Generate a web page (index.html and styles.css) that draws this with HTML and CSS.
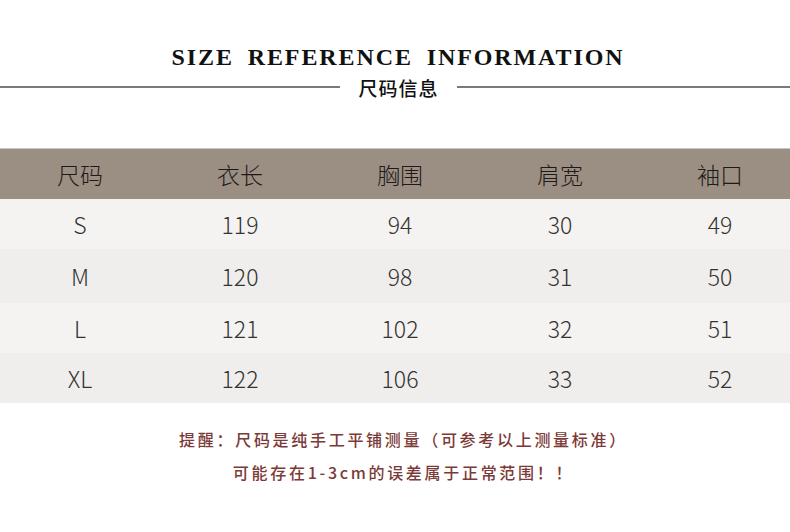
FILE: index.html
```html
<!DOCTYPE html>
<html lang="zh">
<head>
<meta charset="utf-8">
<link rel="stylesheet" href="styles.css">
</head>
<body>
<div class="page">
  <h1 class="title">SIZE REFERENCE INFORMATION</h1>
  <div class="subtitle">
    <span class="rule rule-left"></span>
    <span class="sub-text">尺码信息</span>
    <span class="rule rule-right"></span>
  </div>
  <div class="table">
    <div class="row head">
      <div class="cell">尺码</div><div class="cell">衣长</div><div class="cell">胸围</div><div class="cell">肩宽</div><div class="cell">袖口</div>
    </div>
    <div class="row light">
      <div class="cell">S</div><div class="cell">119</div><div class="cell">94</div><div class="cell">30</div><div class="cell">49</div>
    </div>
    <div class="row dark tall">
      <div class="cell">M</div><div class="cell">120</div><div class="cell">98</div><div class="cell">31</div><div class="cell">50</div>
    </div>
    <div class="row light">
      <div class="cell">L</div><div class="cell">121</div><div class="cell">102</div><div class="cell">32</div><div class="cell">51</div>
    </div>
    <div class="row dark">
      <div class="cell">XL</div><div class="cell">122</div><div class="cell">106</div><div class="cell">33</div><div class="cell">52</div>
    </div>
  </div>
  <div class="note">
    <p>提醒：尺码是纯手工平铺测量（可参考以上测量标准）</p>
    <p>可能存在1-3cm的误差属于正常范围！！</p>
  </div>
</div>
</body>
</html>
```
FILE: styles.css
```css
html, body {
  margin: 0;
  padding: 0;
  background: #ffffff;
}
.page {
  width: 790px;
  height: 532px;
  overflow: hidden;
}
.title {
  margin: 0;
  padding-top: 42px;
  padding-left: 6px;
  font-family: "Liberation Serif", serif;
  font-weight: bold;
  font-size: 24px;
  line-height: 30px;
  letter-spacing: 1.9px;
  word-spacing: 6px;
  text-align: center;
  color: #111;
}
.subtitle {
  display: flex;
  align-items: center;
  margin-top: 0;
  height: 30px;
}
.rule {
  height: 2px;
  background: #7a7a7a;
}
.rule-left { width: 340px; }
.rule-right { flex: 1; }
.sub-text {
  width: 117px;
  text-align: center;
  font-family: "Noto Sans CJK SC", sans-serif;
  font-weight: 500;
  font-size: 19px;
  letter-spacing: 1px;
  color: #111;
}
.table {
  margin-top: 46px;
  border-top: 1px solid #c9c6c2;
}
.row {
  display: grid;
  grid-template-columns: repeat(5, 160px);
  height: 50px;
  align-items: center;
  font-family: "Noto Sans CJK SC", sans-serif;
  font-weight: 300;
  font-size: 23px;
  color: #333;
}
.row.tall { height: 54px; }
.head {
  background: #9b8f84;
  color: #1e1a17;
  height: 50px;
}
.light { background: #f4f3f1; }
.dark { background: #efeeec; }
.cell {
  text-align: center;
}
.note {
  margin-top: 20px;
  padding-left: 17px;
  text-align: center;
  font-family: "Noto Sans CJK SC", sans-serif;
  font-weight: 500;
  font-size: 16px;
  letter-spacing: 2.7px;
  color: #7b3a38;
}
.note p {
  margin: 0;
  line-height: 33px;
}
```
